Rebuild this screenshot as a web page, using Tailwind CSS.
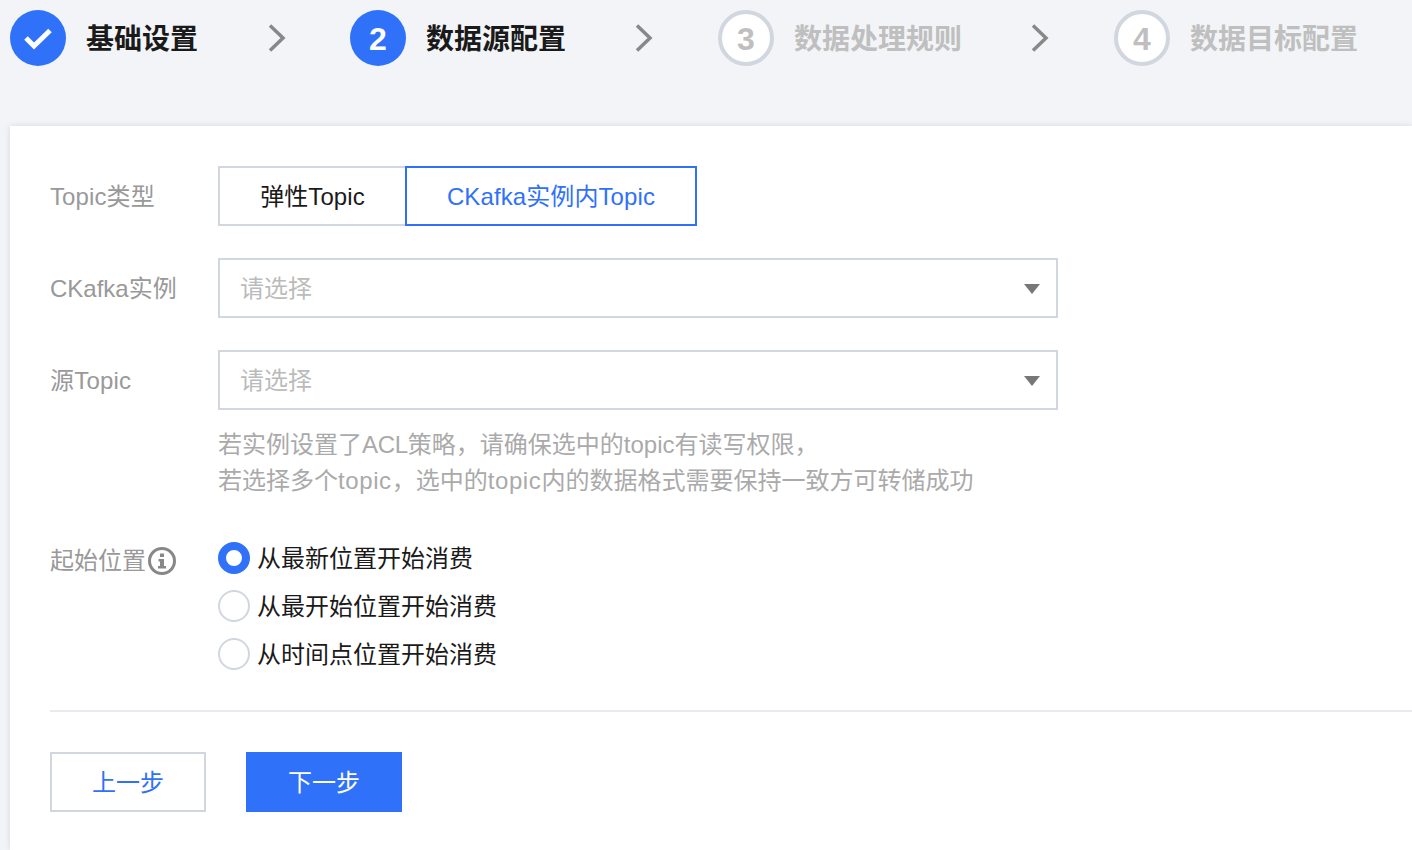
<!DOCTYPE html>
<html lang="zh">
<head>
<meta charset="utf-8">
<script src="https://cdn.jsdelivr.net/npm/@tailwindcss/browser@4"></script>
</head>
<body class="m-0 h-[850px] w-[1412px] overflow-hidden bg-[#f2f4f8] font-['Liberation_Sans','Noto_Sans_CJK_SC',sans-serif]">
  <div class="flex h-[126px] items-start pl-[10px] pt-[10px]">
    <div class="flex h-14 items-center">
      <div class="flex h-14 w-14 items-center justify-center rounded-full bg-[#2f72f9]">
        <svg width="30" height="24" viewBox="0 0 30 24" fill="none"><path d="M3 12l8 8L27 4.500" stroke="#fff" stroke-width="5"/></svg>
      </div>
      <span class="ml-5 w-[112px] pt-1 text-[28px] font-bold text-[#1a1a1a]">基础设置</span>
      <svg class="ml-[70px]" width="18" height="28" viewBox="0 0 18 28" fill="none"><path d="M2 1.500L15 14 2 26.500" stroke="#888" stroke-width="3.500"/></svg>
    </div>
    <div class="ml-[64px] flex h-14 items-center">
      <div class="flex h-14 w-14 items-center justify-center rounded-full bg-[#2f72f9] pt-[2px] text-[32px] font-bold text-white">2</div>
      <span class="ml-5 w-[140px] pt-1 text-[28px] font-bold text-[#1a1a1a]">数据源配置</span>
      <svg class="ml-[69px]" width="18" height="28" viewBox="0 0 18 28" fill="none"><path d="M2 1.500L15 14 2 26.500" stroke="#888" stroke-width="3.500"/></svg>
    </div>
    <div class="ml-[65px] flex h-14 items-center">
      <div class="flex h-14 w-14 items-center justify-center rounded-full border-4 border-[#d1d6df] bg-white pt-[2px] text-[32px] font-bold text-[#bfbfbf]">3</div>
      <span class="ml-5 w-[168px] pt-1 text-[28px] font-bold text-[#bfbfbf]">数据处理规则</span>
      <svg class="ml-[69px]" width="18" height="28" viewBox="0 0 18 28" fill="none"><path d="M2 1.500L15 14 2 26.500" stroke="#888" stroke-width="3.500"/></svg>
    </div>
    <div class="ml-[65px] flex h-14 items-center">
      <div class="flex h-14 w-14 items-center justify-center rounded-full border-4 border-[#d1d6df] bg-white pt-[2px] text-[32px] font-bold text-[#bfbfbf]">4</div>
      <span class="ml-5 pt-1 text-[28px] font-bold text-[#bfbfbf]">数据目标配置</span>
    </div>
  </div>

  <div class="ml-[10px] h-[724px] bg-white pl-10 pt-10 shadow-[0_0_6px_rgba(0,0,0,0.12)]">
    <div class="flex h-[60px] items-center">
      <div class="w-[168px] pt-[2px] text-2xl tracking-[0.1px] text-[#999]">Topic类型</div>
      <div class="flex h-[60px] text-2xl">
        <div class="flex w-[187px] items-center justify-center border-2 border-r-0 border-[#d1d6df] pt-[2px] tracking-[0.1px] text-[#1a1a1a]">弹性Topic</div>
        <div class="flex w-[292px] items-center justify-center border-2 border-[#2f72f9] pt-[2px] tracking-[0.1px] text-[#2f72f9]">CKafka实例内Topic</div>
      </div>
    </div>

    <div class="mt-8 flex h-[60px] items-center">
      <div class="w-[168px] pt-[2px] text-2xl text-[#999]">CKafka实例</div>
      <div class="flex h-[60px] w-[840px] items-center justify-between border-2 border-[#d1d6df] pl-5 pr-[16px] pt-[2px] text-2xl text-[#bbb]">
        <span>请选择</span>
        <svg width="16" height="10" viewBox="0 0 16 10"><path d="M0 0h16L8 10z" fill="#777"/></svg>
      </div>
    </div>

    <div class="mt-8 flex h-[60px] items-center">
      <div class="w-[168px] pt-[2px] text-2xl tracking-[0.2px] text-[#999]">源Topic</div>
      <div class="flex h-[60px] w-[840px] items-center justify-between border-2 border-[#d1d6df] pl-5 pr-[16px] pt-[2px] text-2xl text-[#bbb]">
        <span>请选择</span>
        <svg width="16" height="10" viewBox="0 0 16 10"><path d="M0 0h16L8 10z" fill="#777"/></svg>
      </div>
    </div>

    <div class="ml-[168px] mt-[17px] text-2xl leading-9 text-[#aaa]">
      <p>若实例设置了<span class="tracking-[-0.3px]">ACL</span>策略，请确保选中的topic有读写权限，</p>
      <p>若选择多个<span class="tracking-[0.6px]">topic</span>，选中的<span class="tracking-[0.6px]">topic</span>内的数据格式需要保持一致方可转储成功</p>
    </div>

    <div class="mt-9 flex">
      <div class="flex h-12 w-[168px] items-center text-2xl text-[#999]">
        <span class="pt-1">起始位置</span>
        <svg class="ml-[2px] mt-1" width="28" height="28" viewBox="0 0 28 28" fill="none">
          <circle cx="14" cy="14" r="12.500" stroke="#888" stroke-width="3"/>
          <rect x="12" y="6.500" width="4" height="3.500" fill="#888"/>
          <path d="M10.500 12h5.500v7h2v2.500h-8V19h2v-4.500h-1.500z" fill="#888"/>
        </svg>
      </div>
      <div class="text-2xl text-[#1a1a1a]">
        <div class="flex h-12 items-center gap-[7px]">
          <span class="mb-[2px] h-8 w-8 rounded-full border-[8px] border-[#2f72f9] bg-white"></span>
          <span>从最新位置开始消费</span>
        </div>
        <div class="flex h-12 items-center gap-[7px]">
          <span class="mb-[2px] h-8 w-8 rounded-full border-2 border-[#d1d6df] bg-white"></span>
          <span>从最开始位置开始消费</span>
        </div>
        <div class="flex h-12 items-center gap-[7px]">
          <span class="mb-[2px] h-8 w-8 rounded-full border-2 border-[#d1d6df] bg-white"></span>
          <span>从时间点位置开始消费</span>
        </div>
      </div>
    </div>

    <div class="mt-[31px] h-[2px] bg-[#e8eaef]"></div>

    <div class="mt-10 flex gap-10 text-2xl">
      <div class="flex h-[60px] w-[156px] items-center justify-center border-2 border-[#d1d6df] pt-[2px] text-[#2f72f9]">上一步</div>
      <div class="flex h-[60px] w-[156px] items-center justify-center bg-[#2f72f9] pt-[2px] text-white">下一步</div>
    </div>
  </div>
</body>
</html>
